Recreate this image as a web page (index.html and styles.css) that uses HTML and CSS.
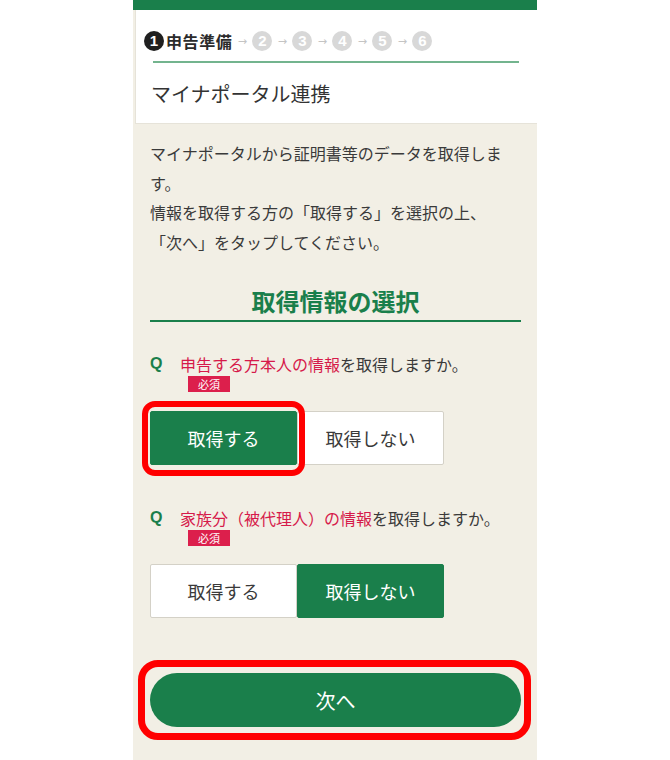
FILE: index.html
```html
<!DOCTYPE html>
<html lang="ja">
<head>
    <meta charset="UTF-8">
    <title>マイナポータル連携</title>

    <link rel="stylesheet" href="styles.css">
</head>
<body>

<div class="screen">

    <div class="topbar"></div>

    <div class="head">
        <div class="steps">
            <span class="num on">1</span><span class="step-name">申告準備</span>
            <span class="arrow">→</span><span class="num">2</span>
            <span class="arrow">→</span><span class="num">3</span>
            <span class="arrow">→</span><span class="num">4</span>
            <span class="arrow">→</span><span class="num">5</span>
            <span class="arrow">→</span><span class="num">6</span>
        </div>
        <div class="head-rule"></div>
        <h1 class="title">マイナポータル連携</h1>
    </div>

    <div class="main">
        <p class="lead">マイナポータルから証明書等のデータを取得します。<br>情報を取得する方の「取得する」を選択の上、<br>「次へ」をタップしてください。</p>

        <h2 class="section">取得情報の選択</h2>

        <div class="q q-first">
            <p class="q-text"><span class="q-mark">Q</span><span><em>申告する方本人の情報</em>を取得しますか。</span></p>
            <span class="badge">必須</span>
            <div class="choice">
                <button class="opt is-on marked">取得する</button>
                <button class="opt">取得しない</button>
            </div>
        </div>

        <div class="q q-second">
            <p class="q-text"><span class="q-mark">Q</span><span><em>家族分（被代理人）の情報</em>を取得しますか。</span></p>
            <span class="badge">必須</span>
            <div class="choice">
                <button class="opt">取得する</button>
                <button class="opt is-on">取得しない</button>
            </div>
        </div>

        <div class="next-wrap marked">
            <button class="next">次へ</button>
        </div>
    </div>

</div>

</body>
</html>
```

FILE: styles.css
```css
* {
    margin: 0;
    padding: 0;
    box-sizing: border-box;
}

body {
    background: #ffffff;
    font-family: "Noto Sans CJK JP", "Noto Sans", sans-serif;
    color: #3a3a3a;
}

.screen {
    width: 404px;
    min-height: 760px;
    margin: 0 auto;
    background: #f2efe5;
}

.topbar {
    height: 10px;
    background: #1a7f4b;
}

/* header card */

.head {
    margin-left: 2px;
    padding-top: 21px;
    background: #ffffff;
    border-left: 1px solid #e6e3d9;
    border-bottom: 1px solid #e6e3d9;
}

.steps {
    display: flex;
    align-items: center;
    height: 20px;
    margin-left: 8px;
}

.num {
    width: 20px;
    height: 20px;
    border-radius: 50%;
    background: #d8d8d8;
    color: #ffffff;
    font-family: "Liberation Sans", sans-serif;
    font-weight: 700;
    font-size: 15px;
    line-height: 20px;
    text-align: center;
}

.num.on {
    background: #1f1f1f;
}

.step-name {
    margin-left: 2px;
    font-size: 16px;
    font-weight: 700;
    color: #2b2b2b;
    letter-spacing: 0.6px;
}

.arrow {
    width: 20px;
    text-align: center;
    font-family: "DejaVu Sans", sans-serif;
    font-size: 11px;
    color: #c4c4c4;
}

.head-rule {
    height: 2px;
    margin: 10px 18px 0 17px;
    background: #73b48e;
}

.title {
    margin-top: 17px;
    padding: 0 0 15px 15px;
    font-size: 20px;
    font-weight: 400;
    line-height: 28px;
    color: #333333;
}

/* main */

.main {
    padding: 15px 16px 20px 17px;
}

.lead {
    font-size: 16px;
    line-height: 29.5px;
}

.section {
    margin-top: 28px;
    padding-bottom: 3px;
    border-bottom: 2px solid #1a7f4b;
    font-size: 24px;
    font-weight: 700;
    line-height: 32px;
    text-align: center;
    color: #1a7f4b;
}

.q-first {
    margin-top: 33px;
}

.q-second {
    margin-top: 44px;
}

.q-text {
    display: flex;
    font-size: 16px;
    line-height: 18px;
}

.q-text em {
    font-style: normal;
    color: #d61a4a;
}

.q-mark {
    width: 30px;
    font-family: "Liberation Sans", sans-serif;
    font-weight: 700;
    color: #1a7f4b;
}

.badge {
    display: block;
    width: 42px;
    height: 16px;
    margin: 3px 0 0 38px;
    background: #dc1f4c;
    color: #ffffff;
    font-size: 11px;
    line-height: 16px;
    text-align: center;
}

.choice {
    display: flex;
    margin-top: 19px;
}

.q-second .choice {
    margin-top: 18px;
}

.opt {
    width: 147px;
    height: 54px;
    border: 1px solid #d4d1c7;
    border-radius: 2px;
    background: #ffffff;
    color: #3a3a3a;
    font-family: inherit;
    font-size: 18px;
}

.opt.is-on {
    background: #1a7f4b;
    border-color: #1a7f4b;
    color: #ffffff;
}

.next-wrap {
    margin-top: 55px;
}

.next {
    display: block;
    width: 100%;
    height: 54px;
    border: none;
    border-radius: 27px;
    background: #1a7f4b;
    color: #ffffff;
    font-family: inherit;
    font-size: 20px;
}

/* red highlight frames drawn over the page */

.marked {
    position: relative;
}

.marked::after {
    content: "";
    position: absolute;
    top: -11px;
    right: -9px;
    bottom: -12px;
    left: -9px;
    border: 6px solid #ff0000;
    border-radius: 13px;
    pointer-events: none;
}

.next-wrap.marked::after {
    top: -13px;
    right: -10px;
    bottom: -13px;
    left: -12px;
    border-width: 7px;
    border-radius: 20px;
}
```
